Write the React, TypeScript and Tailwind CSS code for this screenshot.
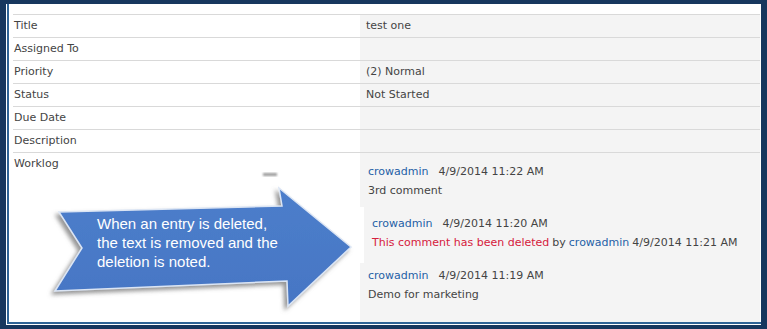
import React from "react";

const font = { fontFamily: '"DejaVu Sans", Verdana, sans-serif' };

const fields: { label: string; value: string }[] = [
  { label: "Title", value: "test one" },
  { label: "Assigned To", value: "" },
  { label: "Priority", value: "(2) Normal" },
  { label: "Status", value: "Not Started" },
  { label: "Due Date", value: "" },
  { label: "Description", value: "" },
];

function Callout() {
  return (
    <>
      <svg
        className="absolute left-0 top-0 pointer-events-none"
        width={767}
        height={329}
        viewBox="0 0 767 329"
      >
        <defs>
          <filter id="shadow" x="-20%" y="-20%" width="140%" height="140%">
            <feDropShadow dx="-3" dy="3" stdDeviation="2" floodColor="#7a7a7a" floodOpacity="0.8" />
          </filter>
          <linearGradient id="fill" x1="0" y1="0" x2="0" y2="1">
            <stop offset="0" stopColor="#4d7ecb" />
            <stop offset="1" stopColor="#4676c4" />
          </linearGradient>
          <filter id="blur">
            <feGaussianBlur stdDeviation="1" />
          </filter>
        </defs>
        {/* white patch behind arrow tip */}
        <rect x={355} y={207} width={9} height={56} fill="#ffffff" />
        <rect x={263} y={173} width={14} height={3} fill="#9a9a9a" filter="url(#blur)" />
        <polygon
          points="59,212 282,206 279,188 351,247 288,306 287,281 55,291 82,248"
          fill="url(#fill)"
          stroke="#dbe5f4"
          strokeWidth={1.5}
          strokeLinejoin="miter"
          filter="url(#shadow)"
        />
      </svg>
      <div
        className="absolute left-[97px] top-[214px] text-[15px] leading-[19px] text-white pointer-events-none"
        style={{ fontFamily: '"Liberation Sans", Arial, sans-serif' }}
      >
        <div>When an entry is deleted,</div>
        <div>the text is removed and the</div>
        <div>deletion is noted.</div>
      </div>
    </>
  );
}

function Entry({
  date,
  children,
  shifted,
}: {
  date: string;
  children: React.ReactNode;
  shifted?: boolean;
}) {
  return (
    <div className={shifted ? "pl-[12px]" : "pl-[8px]"}>
      <div className="h-[19px] flex items-center gap-[10px]">
        <span className="text-[#1f5fa6]">crowadmin</span>
        <span>{date}</span>
      </div>
      <div className="h-[18px] flex items-center">{children}</div>
    </div>
  );
}

export default function App() {
  return (
    <div className="relative w-[767px] h-[329px] bg-[#17375e] pt-[4px] pl-[6px] pr-[6px] pb-[4px]">
      <div className="h-full border-l border-b border-white">
        <div className="h-full border-l-2 border-b-2 border-[#2f6496] bg-white pt-[10px] pl-[4px] pr-[1px] flex flex-col">
          <div className="flex-1 flex flex-col text-[11px] text-[#444444]" style={font}>
            {fields.map((f) => (
              <div key={f.label} className="flex h-[23px] border-t border-[#d9d9d9]">
                <div className="w-[347px] pl-[1px] flex items-center">{f.label}</div>
                <div className="flex-1 bg-[#f4f4f4] pl-[6px] flex items-center">{f.value}</div>
              </div>
            ))}
            <div className="flex flex-1 border-t border-[#d9d9d9]">
              <div className="w-[347px] pl-[1px] pt-[3px]">Worklog</div>
              <div className="flex-1 bg-[#f4f4f4] pt-[10px] flex flex-col gap-[15px]">
                <Entry date="4/9/2014 11:22 AM">3rd comment</Entry>
                <Entry date="4/9/2014 11:20 AM" shifted>
                  <span className="text-[#d6203c]">This comment has been deleted</span>
                  <span className="ml-[3px]">by</span>
                  <span className="ml-[3px] text-[#1f5fa6]">crowadmin</span>
                  <span className="ml-[3px]">4/9/2014 11:21 AM</span>
                </Entry>
                <Entry date="4/9/2014 11:19 AM">Demo for marketing</Entry>
              </div>
            </div>
          </div>
        </div>
      </div>
      <Callout />
    </div>
  );
}
